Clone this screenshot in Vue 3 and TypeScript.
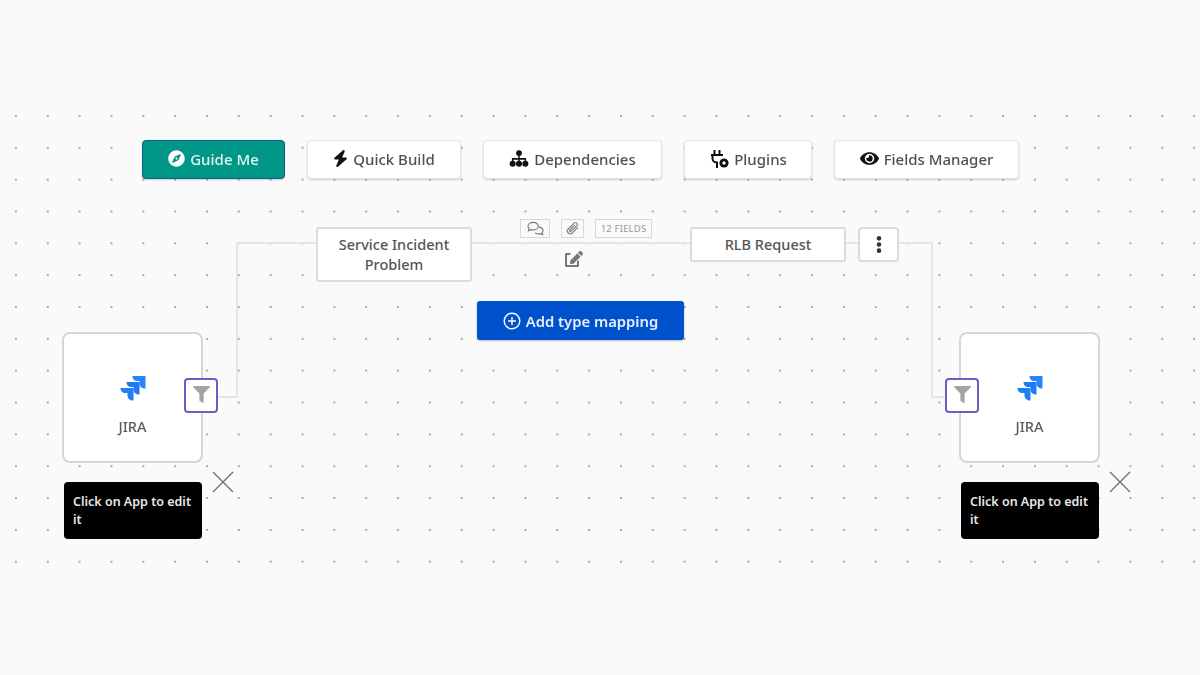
<script setup lang="ts">
interface ToolButton {
  label: string
  width: number
  primary?: boolean
  viewBox?: string
  path?: string
  iconWidth: number
  kind?: 'sitemap' | 'plug'
}

const compass = 'M225.38 233.37c-12.5 12.5-12.5 32.76 0 45.25 12.49 12.5 32.76 12.5 45.25 0 12.5-12.5 12.5-32.76 0-45.25-12.5-12.49-32.76-12.49-45.25 0zM248 8C111.03 8 0 119.03 0 256s111.03 248 248 248 248-111.03 248-248S384.97 8 248 8zm126.14 148.05L308.17 300.4a31.938 31.938 0 0 1-15.77 15.77l-144.34 65.97c-16.65 7.61-33.81-9.55-26.2-26.2l65.98-144.35a31.938 31.938 0 0 1 15.77-15.77l144.34-65.97c16.65-7.6 33.8 9.55 26.19 26.2z'
const bolt = 'M349.4 44.6c5.9-13.7 1.5-29.7-10.6-38.5s-28.6-8-39.9 1.8l-256 224c-10 8.8-13.6 22.9-8.9 35.3S50.7 288 64 288H175.5L98.6 467.4c-5.9 13.7-1.5 29.7 10.6 38.5s28.6 8 39.9-1.8l256-224c10-8.8 13.6-22.9 8.9-35.3s-16.6-20.7-30-20.7H272.5L349.4 44.6z'
const eye = 'M572.52 241.4C518.29 135.59 410.93 64 288 64S57.68 135.64 3.48 241.41a32.35 32.35 0 0 0 0 29.19C57.71 376.41 165.07 448 288 448s230.32-71.64 284.52-177.41a32.35 32.35 0 0 0 0-29.19zM288 400a144 144 0 1 1 144-144 143.93 143.93 0 0 1-144 144zm0-240a95.31 95.31 0 0 0-25.31 3.79 47.85 47.85 0 0 1-66.9 66.9A95.78 95.78 0 1 0 288 160z'
const funnel = 'M487.976 0H24.028C2.71 0-8.047 25.866 7.058 40.971L192 225.941V432c0 7.831 3.821 15.17 10.237 19.662l80 55.98C298.02 518.69 320 507.493 320 487.98V225.941l184.947-184.97C520.021 25.896 509.338 0 487.976 0z'
const edit = 'M402.6 83.2l90.2 90.2c3.8 3.8 3.8 10 0 13.8L274.4 405.6l-92.8 10.3c-12.4 1.4-22.9-9.1-21.5-21.5l10.3-92.8L388.8 83.2c3.8-3.8 10-3.8 13.8 0zm162-22.9l-48.8-48.8c-15.2-15.2-39.9-15.2-55.2 0l-35.4 35.4c-3.8 3.8-3.8 10 0 13.8l90.2 90.2c3.8 3.8 10 3.8 13.8 0l35.4-35.4c15.2-15.3 15.2-40 0-55.2zM384 346.2V448H64V128h73.1c3.2 0 6.2-1.3 8.5-3.5l40-40c7.6-7.6 2.2-20.5-8.5-20.5H48C21.5 64 0 85.5 0 112v352c0 26.5 21.5 48 48 48h352c26.5 0 48-21.5 48-48V306.2c0-10.7-12.9-16-20.5-8.5l-40 40c-2.2 2.3-3.5 5.3-3.5 8.5z'

const tools: ToolButton[] = [
  { label: 'Guide Me', width: 143, primary: true, viewBox: '0 0 496 512', path: compass, iconWidth: 17 },
  { label: 'Quick Build', width: 154, viewBox: '0 0 448 512', path: bolt, iconWidth: 15 },
  { label: 'Dependencies', width: 179, kind: 'sitemap', iconWidth: 20 },
  { label: 'Plugins', width: 128, kind: 'plug', iconWidth: 20 },
  { label: 'Fields Manager', width: 185, viewBox: '0 0 576 512', path: eye, iconWidth: 19 },
]

const apps = [
  { id: 'left', card: 62, filter: 184, tip: 64, close: 212 },
  { id: 'right', card: 959, filter: 945, tip: 961, close: 1109 },
]
</script>

<template>
  <main class="page">
    <section class="canvas">
      <nav class="toolbar">
        <button
          v-for="t in tools"
          :key="t.label"
          class="tool"
          :class="{ primary: t.primary }"
          :style="{ width: t.width + 'px' }"
        >
          <svg v-if="t.path" :viewBox="t.viewBox" :width="t.iconWidth" height="17" fill="currentColor"><path :d="t.path" /></svg>
          <svg v-else-if="t.kind === 'sitemap'" viewBox="0 0 20 18" :width="t.iconWidth" height="17" fill="#111">
            <circle cx="10" cy="3.3" r="3.1" />
            <path d="M9.2 6h1.6v2.600H17.500V12h-1.600v-1.800H10.800V12H9.200v-1.800H4.100V12H2.500V8.600h6.700z" />
            <circle cx="3.300" cy="14.600" r="3.200" />
            <circle cx="10" cy="14.600" r="3.200" />
            <circle cx="16.700" cy="14.600" r="3.200" />
          </svg>
          <svg v-else viewBox="0 0 20 20" :width="t.iconWidth" height="20" fill="none" stroke="#111" stroke-width="2">
            <path d="M5.500 1v5M10.500 1v5M2 6h12M3.500 6v3.500a4 4 0 0 0 4 4h1.500M8 13.500V19" />
            <circle cx="15" cy="14" r="4.600" fill="#111" stroke="none" />
            <circle cx="15" cy="14" r="1.700" fill="#fff" stroke="none" />
          </svg>
          <span>{{ t.label }}</span>
        </button>
      </nav>

      <svg class="links" width="1200" height="475" fill="none" stroke="#e6e6e6" stroke-width="2">
        <path d="M217 297H237V143H317" />
        <path d="M471 143H691" />
        <path d="M846 143H858" />
        <path d="M899 143H932V297H945" />
      </svg>

      <div class="type-node service">Service Incident<br />Problem</div>
      <div class="type-node rlb">RLB Request</div>
      <button class="menu-btn" aria-label="More">
        <svg viewBox="0 0 6 18" width="6" height="17" fill="#333"><circle cx="3" cy="2.500" r="2.400" /><circle cx="3" cy="9" r="2.400" /><circle cx="3" cy="15.500" r="2.400" /></svg>
      </button>

      <span class="chip chip-comments">
        <svg viewBox="0 0 20 16" width="19" height="15" fill="none" stroke="#777" stroke-width="1.200">
          <path d="M7.500 1.500c-3 0-5.500 1.800-5.500 4 0 1 .5 1.900 1.300 2.600L2.500 10.500l3-1.200c.6.200 1.300.2 2 .2 3 0 5.500-1.800 5.500-4s-2.500-4-5.500-4z" />
          <path d="M13.500 6.500c2.500.2 4.500 1.800 4.500 3.700 0 .9-.4 1.700-1.100 2.300l.8 2-2.600-1c-1.600.5-4 .3-5.500-.7" />
        </svg>
      </span>
      <span class="chip chip-clip">
        <svg viewBox="0 0 16 16" width="15" height="15" fill="none" stroke="#888" stroke-width="1.300" stroke-linecap="round">
          <path d="M13.500 7l-5.800 5.800a3 3 0 0 1-4.300-4.300l6.300-6.300a2 2 0 0 1 2.900 2.900L6.400 11a1 1 0 0 1-1.400-1.400l5-5" />
        </svg>
      </span>
      <span class="chip chip-fields">12 FIELDS</span>
      <svg class="edit-icon" viewBox="0 0 576 512" width="18" height="16" fill="#777"><path :d="edit" /></svg>

      <button class="add-btn">
        <svg viewBox="0 0 18 18" width="18" height="18" fill="none" stroke="#fff" stroke-width="1.400">
          <circle cx="9" cy="9" r="7.800" />
          <path d="M9 5v8M5 9h8" />
        </svg>
        <span>Add type mapping</span>
      </button>

      <template v-for="a in apps" :key="a.id">
        <div class="app-card" :style="{ left: a.card + 'px' }">
          <svg viewBox="0 0 26 26" width="26" height="26">
            <path d="M25.500 1H12.500c0 3 2 5 5 5h2v2.500c0 3 2.500 5 6 5z" fill="#2684ff" />
            <path d="M19.500 7H6.500c0 3 2 5 5 5h2v2.500c0 3 2.500 5 6 5z" fill="#1d7af2" />
            <path d="M13.500 13H.5c0 3 2 5 5 5h2v2.500c0 3 2.500 5 6 5z" fill="#1f80f8" />
          </svg>
          <span class="app-name">JIRA</span>
        </div>
        <button class="filter-btn" :style="{ left: a.filter + 'px' }" aria-label="Filter">
          <svg viewBox="0 0 512 512" width="17" height="17" fill="#a3a3a3"><path :d="funnel" /></svg>
        </button>
        <div class="tip" :style="{ left: a.tip + 'px' }">Click on App to edit it</div>
        <svg class="close" :style="{ left: a.close + 'px' }" viewBox="0 0 22 22" width="22" height="22" stroke="#6e6e6e" stroke-width="1.300">
          <path d="M1 1l20 20M21 1L1 21" />
        </svg>
      </template>
    </section>
  </main>
</template>

<style scoped>
.page {
  width: 1200px;
  height: 675px;
  padding-top: 100px;
  box-sizing: border-box;
  background: #fafafa;
  font-family: "Noto Sans", "Open Sans", sans-serif;
  overflow: hidden;
}
.canvas {
  position: relative;
  width: 1200px;
  height: 475px;
  background-image: radial-gradient(circle at center, #ababab 0, #ababab 1px, transparent 1.500px);
  background-size: 31.850px 31.850px;
  filter: blur(0.45px);
}
.toolbar {
  display: flex;
  gap: 22px;
  padding: 40px 0 0 142px;
  align-items: flex-start;
}
button {
  font-family: inherit;
  cursor: pointer;
}
.tool {
  height: 39px;
  display: flex;
  align-items: center;
  justify-content: center;
  gap: 5px;
  padding: 0 0 2px;
  background: #fff;
  color: #111;
  border: 1px solid #e3e3e3;
  border-radius: 4px;
  box-shadow: 0 1px 2px rgba(0, 0, 0, 0.18);
  box-sizing: border-box;
}
.tool span {
  color: #4f4f58;
  font-size: 15px;
  font-weight: 500;
}
.tool.primary {
  background: #009688;
  border-color: #0b5c93;
  color: #fff;
}
.tool.primary span {
  color: #e4f4f2;
  font-weight: 500;
}
.links {
  position: absolute;
  left: 0;
  top: 0;
}
.type-node {
  position: absolute;
  box-sizing: border-box;
  display: flex;
  align-items: center;
  justify-content: center;
  padding-bottom: 2px;
  text-align: center;
  background: #fff;
  border: 2px solid #dcdcdc;
  border-radius: 3px;
  color: #555;
  font-size: 14.500px;
  font-weight: 500;
  line-height: 20px;
}
.service {
  left: 316px;
  top: 127px;
  width: 156px;
  height: 55px;
}
.rlb {
  left: 690px;
  top: 127px;
  width: 156px;
  height: 35px;
}
.menu-btn {
  position: absolute;
  left: 858px;
  top: 127px;
  width: 41px;
  height: 35px;
  display: flex;
  align-items: center;
  justify-content: center;
  padding: 0;
  background: #fff;
  border: 2px solid #dcdcdc;
  border-radius: 4px;
}
.chip {
  position: absolute;
  top: 119px;
  height: 19px;
  box-sizing: border-box;
  display: flex;
  align-items: center;
  justify-content: center;
  background: #fafafa;
  border: 1px solid #d8d8d8;
}
.chip-comments {
  left: 520px;
  width: 30px;
}
.chip-clip {
  left: 561px;
  width: 23px;
}
.chip-fields {
  left: 595px;
  width: 57px;
  color: #999;
  font-size: 9.500px;
  letter-spacing: 0.2px;
}
.edit-icon {
  position: absolute;
  left: 565px;
  top: 151px;
}
.add-btn {
  position: absolute;
  left: 477px;
  top: 201px;
  width: 207px;
  height: 39px;
  display: flex;
  align-items: center;
  justify-content: center;
  gap: 5px;
  padding: 0;
  border: 0;
  border-radius: 3px;
  background: #0052cc;
  box-shadow: 0 1px 2px rgba(0, 0, 0, 0.25);
  color: #e9effa;
  font-size: 14.800px;
  font-weight: 600;
}
.app-card {
  position: absolute;
  top: 232px;
  width: 141px;
  height: 131px;
  box-sizing: border-box;
  padding-top: 41px;
  display: flex;
  flex-direction: column;
  align-items: center;
  gap: 15px;
  background: #fff;
  border: 2px solid #d6d6d6;
  border-radius: 8px;
}
.app-name {
  color: #5c5c5c;
  font-size: 14.500px;
  font-weight: 500;
  line-height: 20px;
}
.filter-btn {
  position: absolute;
  top: 278px;
  width: 34px;
  height: 35px;
  box-sizing: border-box;
  padding: 0 0 3px;
  display: flex;
  align-items: center;
  justify-content: center;
  background: #fff;
  border: 2px solid #6f5cc0;
  border-radius: 4px;
}
.tip {
  position: absolute;
  top: 382px;
  width: 138px;
  height: 57px;
  box-sizing: border-box;
  padding: 11px 9px;
  background: #000;
  border-radius: 4px;
  color: #e8e8e8;
  font-size: 12.500px;
  font-weight: 600;
  line-height: 18px;
  letter-spacing: 0;
}
.close {
  position: absolute;
  top: 371px;
}
</style>
